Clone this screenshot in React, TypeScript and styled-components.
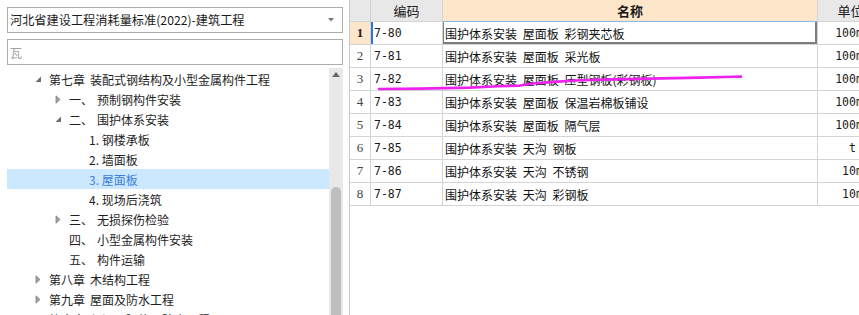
import React from 'react';
import styled, { createGlobalStyle, css } from 'styled-components';

const GlobalStyle = createGlobalStyle`
  html, body {
    margin: 0;
    padding: 0;
    background: #ffffff;
  }
  body {
    font-family: 'Noto Sans CJK SC', 'Noto Sans', sans-serif;
    color: #1e1e1e;
  }
`;

const Page = styled.div`
  position: relative;
  width: 859px;
  height: 315px;
  display: flex;
  overflow: hidden;
  background: #ffffff;
`;

const LeftPane = styled.div`
  width: 349px;
  flex: none;
  box-sizing: border-box;
  padding: 7px 6px 0 7px;
  display: flex;
  flex-direction: column;
`;

const inputBox = css`
  height: 26px;
  box-sizing: border-box;
  border: 1px solid #acacac;
  display: flex;
  align-items: center;
  padding: 0 8px 0 2px;
  white-space: nowrap;
`;

const Combo = styled.div`
  ${inputBox};
  justify-content: space-between;
  font-size: 12.2px;
  color: #1a1a1a;
`;

const SearchBox = styled.div`
  ${inputBox};
  margin-top: 6px;
  font-size: 12px;
  color: #a0a0a0;
`;

const TreeArea = styled.div`
  flex: 1;
  margin-top: 3px;
  display: flex;
  min-height: 0;
`;

const TreeList = styled.div`
  flex: 1;
  padding-top: 1px;
`;

const TreeRow = styled.div<{ $level: number; $selected?: boolean }>`
  height: 20px;
  display: flex;
  align-items: center;
  padding-left: ${(p) => 25 + p.$level * 20}px;
  font-size: 12px;
  white-space: nowrap;
  background: ${(p) => (p.$selected ? '#cce8ff' : 'transparent')};
  color: ${(p) => (p.$selected ? '#3b7fd9' : '#1e1e1e')};
`;

const Expander = styled.span`
  width: 12px;
  height: 12px;
  flex: none;
  display: flex;
  align-items: center;
  justify-content: center;
  margin-right: 5px;
`;

const SectionNo = styled.span`
  display: inline-block;
  width: 28px;
`;

const ChapterNo = styled.span`
  margin-right: 5px;
`;

const ScrollTrack = styled.div`
  width: 14px;
  flex: none;
  background: #e8e8e8;
  display: flex;
  flex-direction: column;
  align-items: center;
`;

const ScrollArrow = styled.div`
  height: 12px;
  display: flex;
  align-items: center;
  justify-content: center;
`;

const ScrollThumb = styled.div`
  margin-top: auto;
  width: 10px;
  height: 128px;
  border-radius: 5px 5px 0 0;
  background: #bebebe;
`;

const RightPane = styled.div`
  flex: 1;
  border-left: 1px solid #c8c8c8;
  overflow: hidden;
`;

const Grid = styled.div`
  display: grid;
  grid-template-columns: 21px 72px 375px 66px;
  grid-template-rows: 22px;
  grid-auto-rows: 23px;
  width: max-content;
`;

const Cell = styled.div<{ $bg?: string }>`
  box-sizing: border-box;
  border-right: 1px solid #d4d4d4;
  border-bottom: 1px solid #d4d4d4;
  background: ${(p) => p.$bg || '#ffffff'};
  display: flex;
  align-items: center;
  white-space: nowrap;
  overflow: hidden;
`;

const HeadCell = styled(Cell)<{ $bold?: boolean; $accent?: boolean }>`
  justify-content: center;
  font-size: 13px;
  font-weight: ${(p) => (p.$bold ? 700 : 400)};
  color: #1a1a1a;
  border-bottom-color: ${(p) => (p.$accent ? '#8db8e6' : '#d4d4d4')};
`;

const NumCell = styled(Cell)<{ $active?: boolean }>`
  justify-content: center;
  font-family: 'Liberation Serif', serif;
  font-size: 13px;
  font-weight: ${(p) => (p.$active ? 700 : 400)};
  color: ${(p) => (p.$active ? '#1a1a1a' : '#444444')};
`;

const CodeCell = styled(Cell)<{ $active?: boolean }>`
  padding-left: 3px;
  font-family: 'DejaVu Sans Mono', 'Liberation Mono', monospace;
  font-size: 11.5px;
  color: #1a1a1a;
  ${(p) => p.$active && 'box-shadow: inset 2px 0 0 #2a76e0;'}
`;

const NameCell = styled(Cell)<{ $active?: boolean }>`
  padding-left: 2px;
  font-size: 12px;
  word-spacing: 3px;
  color: #111111;
  ${(p) => p.$active && 'box-shadow: inset -2px -2px 0 #7d7d7d, inset 1px 0 0 #7d7d7d;'}
`;

const UnitCell = styled(Cell)`
  justify-content: center;
  padding-left: 4px;
  font-family: 'DejaVu Sans Mono', 'Liberation Mono', monospace;
  font-size: 11.5px;
  color: #1a1a1a;
`;

const Annotation = styled.svg`
  position: absolute;
  left: 0;
  top: 0;
  pointer-events: none;
`;

type Node = {
  level: number;
  arrow?: 'open' | 'closed';
  no?: string;
  text: string;
  selected?: boolean;
};

const tree: Node[] = [
  { level: 0, arrow: 'open', no: '第七章', text: '装配式钢结构及小型金属构件工程' },
  { level: 1, arrow: 'closed', no: '一、', text: '预制钢构件安装' },
  { level: 1, arrow: 'open', no: '二、', text: '围护体系安装' },
  { level: 2, text: '1. 钢楼承板' },
  { level: 2, text: '2. 墙面板' },
  { level: 2, text: '3. 屋面板', selected: true },
  { level: 2, text: '4. 现场后浇筑' },
  { level: 1, arrow: 'closed', no: '三、', text: '无损探伤检验' },
  { level: 1, no: '四、', text: '小型金属构件安装' },
  { level: 1, no: '五、', text: '构件运输' },
  { level: 0, arrow: 'closed', no: '第八章', text: '木结构工程' },
  { level: 0, arrow: 'closed', no: '第九章', text: '屋面及防水工程' },
  { level: 0, arrow: 'closed', no: '第十章', text: '保温、隔热、防腐工程' },
];

const rows = [
  { code: '7-80', name: '围护体系安装 屋面板 彩钢夹芯板', unit: '100m²' },
  { code: '7-81', name: '围护体系安装 屋面板 采光板', unit: '100m²' },
  { code: '7-82', name: '围护体系安装 屋面板 压型钢板(彩钢板)', unit: '100m²' },
  { code: '7-83', name: '围护体系安装 屋面板 保温岩棉板铺设', unit: '100m²' },
  { code: '7-84', name: '围护体系安装 屋面板 隔气层', unit: '100m²' },
  { code: '7-85', name: '围护体系安装 天沟 钢板', unit: 't' },
  { code: '7-86', name: '围护体系安装 天沟 不锈钢', unit: '10m' },
  { code: '7-87', name: '围护体系安装 天沟 彩钢板', unit: '10m' },
];

const Arrow = ({ kind }: { kind: 'open' | 'closed' }) =>
  kind === 'open' ? (
    <svg width="7" height="7" viewBox="0 0 7 7">
      <polygon points="6,0.5 6,6 0.5,6" fill="#6e6e6e" />
    </svg>
  ) : (
    <svg width="6" height="9" viewBox="0 0 6 9">
      <polygon points="1,0.8 5,4.5 1,8.2" fill="#a2a2a2" stroke="#808080" strokeWidth="0.8" />
    </svg>
  );

const App = (): React.ReactElement => (
  <>
    <GlobalStyle />
    <Page>
      <LeftPane>
        <Combo>
          <span>河北省建设工程消耗量标准(2022)-建筑工程</span>
          <svg width="6" height="4" viewBox="0 0 6 4">
            <polygon points="0,0 6,0 3,3.5" fill="#7a7a7a" />
          </svg>
        </Combo>
        <SearchBox>瓦</SearchBox>
        <TreeArea>
          <TreeList>
            {tree.map((n, i) => (
              <TreeRow key={i} $level={n.level} $selected={n.selected}>
                <Expander>{n.arrow && <Arrow kind={n.arrow} />}</Expander>
                {n.level === 0 && <ChapterNo>{n.no}</ChapterNo>}
                {n.level === 1 && <SectionNo>{n.no}</SectionNo>}
                <span>{n.text}</span>
              </TreeRow>
            ))}
          </TreeList>
          <ScrollTrack>
            <ScrollArrow>
              <svg width="8" height="5" viewBox="0 0 8 5">
                <polygon points="0,5 8,5 4,0" fill="#666666" />
              </svg>
            </ScrollArrow>
            <ScrollThumb />
          </ScrollTrack>
        </TreeArea>
      </LeftPane>

      <RightPane>
        <Grid>
          <HeadCell $bg="#e8e8e8" />
          <HeadCell $bg="#e8e8e8">编码</HeadCell>
          <HeadCell $bg="#fde6c9" $bold $accent>
            名称
          </HeadCell>
          <HeadCell $bg="#e8e8e8">单位</HeadCell>
          {rows.map((r, i) => (
            <React.Fragment key={r.code}>
              <NumCell $active={i === 0} $bg={i === 0 ? '#fde6c9' : '#ffffff'}>
                {i + 1}
              </NumCell>
              <CodeCell $active={i === 0}>{r.code}</CodeCell>
              <NameCell $active={i === 0}>{r.name}</NameCell>
              <UnitCell>{r.unit}</UnitCell>
            </React.Fragment>
          ))}
        </Grid>
      </RightPane>

      <Annotation width="859" height="315" viewBox="0 0 859 315">
        <path
          d="M379 89 L420 88.6 L470 87.6 L498 86.2 L520 85.6 L527 84.2 L536 83.2 L558 81.6 L580 80.2 L602 79.6 L650 78.6 L700 77.6 L733 76.8 L741 76.6"
          fill="none"
          stroke="#ee22ee"
          strokeWidth="2.6"
          strokeLinecap="round"
          strokeLinejoin="round"
        />
      </Annotation>
    </Page>
  </>
);

export default App;
